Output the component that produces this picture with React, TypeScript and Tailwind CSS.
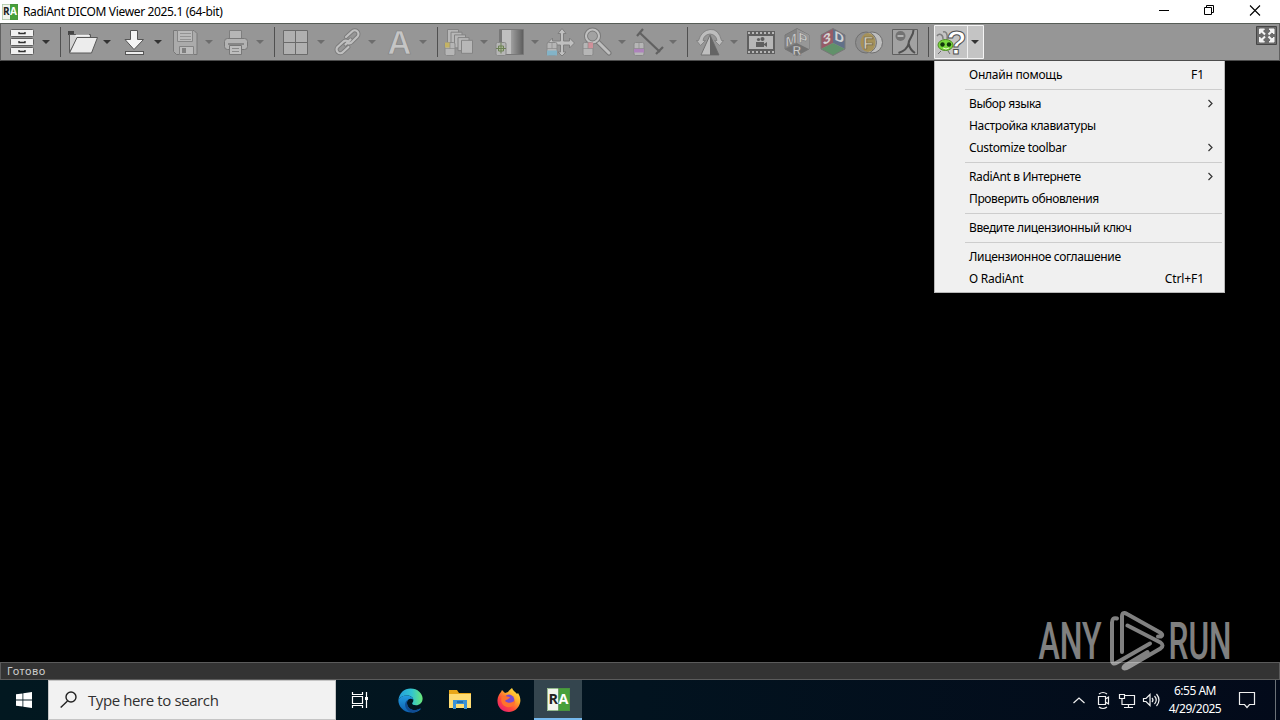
import type { ReactNode } from "react";

/* Toolbar drawings share one coordinate system: x runs along the window, y from its top. */
function Tool({ x, w, children, off = false }: { x: number; w: number; children?: ReactNode; off?: boolean }) {
  return (
    <svg width={w} height={36} viewBox={`${x} 24 ${w} 36`} className={off ? "shrink-0 overflow-visible opacity-70" : "shrink-0 overflow-visible"}>
      {children}
    </svg>
  );
}

function Arrow({ x, off = false }: { x: number; off?: boolean }) {
  return <path d={`M${x} 40h8l-4 4z`} fill={off ? "#5c5c5c" : "#333"} />;
}

function Sep() {
  return <div className="h-[30px] w-px shrink-0 bg-[#505050]" />;
}

function Mouse({ x, y, color }: { x: number; y: number; color: "left" | "right" | "mid" | "move" | "purple" }) {
  return (
    <g>
      <rect x={x} y={y} width="10" height="13" rx="1.5" fill="#c4c4c4" stroke="#848484" />
      {color === "left" && <path d={`M${x} ${y}h5v5h-5z`} fill="#d8c050" />}
      {color === "right" && <path d={`M${x + 5} ${y}h5v6h-5z`} fill="#e8909c" />}
      {color === "mid" && (
        <path d={`M${x + 2.5} ${y + 3.5}h5v5h-5zM${x + 5} ${y}v11M${x} ${y + 6}h10`} fill="#b4cc98" stroke="#5d783b" />
      )}
      {color === "move" && <path d={`M${x} ${y + 8}h10v5h-10z`} fill="#7cc0dc" />}
      {color === "purple" && <path d={`M${x} ${y + 6}h10v4h-10z`} fill="#b87ccc" />}
      {color !== "mid" && <path d={`M${x} ${y + 6}h10M${x + 5} ${y}v6`} stroke="#858585" strokeWidth=".7" />}
    </g>
  );
}

function Toolbar() {
  return (
    <div className="flex h-[38px] w-full shrink-0 items-center border border-t-[#575d57] border-r-[#606060] border-b-[#4c4c4c] border-l-[#606060] bg-[#969696]">
      <Tool x={1} w={59}>
        {[29.5, 38.5, 47.5].map((y) => (
          <g key={y}>
            <rect x="10.5" y={y} width="23" height="7" rx="1" fill="#f1f1f1" stroke="#606060" />
            <path d={`M19 ${y + 2.5}v1.500h6v-1.500`} fill="none" stroke="#303030" strokeWidth="1.4" />
          </g>
        ))}
        <Arrow x={42} />
      </Tool>
      <Sep />
      <Tool x={61} w={52}>
        <path d="M68 35v-4h6v4" fill="#444" />
        <path d="M69.500 52.500v-18h21v4h-13z" fill="#d4d4d4" stroke="#585858" />
        <path d="M77 37.500h20.500l-6 15.500H69.500z" fill="#ececec" stroke="#585858" />
        <path d="M76 34.500h13v2H75z" fill="#f2f2f2" />
        <Arrow x={103} />
      </Tool>
      <Tool x={113} w={52}>
        <path d="M130.500 30.500h7v9h6L134 49.500l-9-10h5.500z" fill="#f5f5f5" stroke="#555" />
        <rect x="125.500" y="51.500" width="18" height="3" fill="#eee" stroke="#555" />
        <Arrow x={154} />
      </Tool>
      <Tool x={165} w={51} off>
        <path d="M173.500 30.500H194l3 3v21h-20.500l-3-3z" fill="#b4b4b4" stroke="#6c6c6c" />
        <path d="M177.500 30.500h15v11h-15z" fill="#cacaca" stroke="#808080" />
        <path d="M180 33.500h11M180 36.500h11M180 39.500h11" stroke="#929292" />
        <path d="M179.500 46.500h14v8h-14z" fill="#cdcdcd" stroke="#7c7c7c" />
        <path d="M182 48h4v5h-4z" fill="#777" />
        <Arrow x={205} off />
      </Tool>
      <Tool x={216} w={58} off>
        <path d="M229.500 38v-7.500h12v7.500" fill="#c4c4c4" stroke="#747474" />
        <rect x="224.500" y="38.500" width="23" height="11" rx="3" fill="#c0c0c0" stroke="#6c6c6c" />
        <path d="M228 44h16" stroke="#606060" strokeWidth="1.3" />
        <path d="M229.500 45.500h12v9h-12z" fill="#cecece" stroke="#6c6c6c" />
        <path d="M232 48.500h7M232 51.500h7" stroke="#848484" />
        <Arrow x={256} off />
      </Tool>
      <Sep />
      <Tool x={275} w={52} off>
        <path d="M283.500 30.500h24v24h-24z" fill="#bcbcbc" stroke="#585858" />
        <path d="M295.500 30v25M283 42.500h25" stroke="#585858" />
        <Arrow x={317} off />
      </Tool>
      <Tool x={327} w={52} off>
        {["#707070", "#d2d2d2"].map((c, i) => (
          <g key={c} fill="none" stroke={c} strokeWidth={i ? 2.2 : 4} strokeLinecap="round">
            <path d="M346 37l6-5.500a3.600 3.600 0 0 1 5.500 5l-6 6q-2 1.500-4 .5" />
            <path d="M348.500 47l-5.500 5a3.600 3.600 0 0 1-5.500-5l6-5.500q2-1.500 4-.5" />
            <path d="M345.500 44.500l5-5" />
          </g>
        ))}
        <Arrow x={368} off />
      </Tool>
      <Tool x={379} w={58} off>
        <text x="387.500" y="54" fontSize="33" fontWeight="700" fontFamily="Liberation Sans, sans-serif" fill="#dadada" stroke="#787878" strokeWidth=".7">A</text>
        <Arrow x={419} off />
      </Tool>
      <Sep />
      <Tool x={438} w={54} off>
        {[0, 3.5, 7, 10.5, 14].map((d, i) => (
          <path key={d} d={`M${447.5 + d} ${29.5 + i * 2.7}h11v13h-11z`} fill="#c6c6c6" stroke="#7c7c7c" />
        ))}
        <Mouse x={445} y={42.5} color="left" />
        <Arrow x={480} off />
      </Tool>
      <Tool x={492} w={52} off>
        <defs>
          <linearGradient id="contrast">
            <stop stopColor="#a4a4a4" />
            <stop offset="1" stopColor="#484848" />
          </linearGradient>
        </defs>
        <path d="M499.500 29.500h24v25h-24z" fill="#808080" stroke="#6c6c6c" />
        <path d="M500 30h11v24h-11z" fill="#d2d2d2" />
        <path d="M500 30h2v24h-2z" fill="#6c6c6c" />
        <path d="M511 30h12v24h-12z" fill="url(#contrast)" />
        <Mouse x={496} y={42.5} color="mid" />
        <Arrow x={531} off />
      </Tool>
      <Tool x={544} w={35} off>
        <path d="M562 28.500l4 5h-2.500v7.500h6v-3l5 5-5 5v-3h-6v7h2.500l-4 4-4-4h2.500v-7h-8v3l-5-5 5-5v3h8v-7.500H558z" fill="#d2d2d2" stroke="#747474" />
        <Mouse x={547} y={42.5} color="move" />
      </Tool>
      <Tool x={579} w={50} off>
        <path d="M597 41l12 12" stroke="#6c6c6c" strokeWidth="5" strokeLinecap="round" />
        <path d="M598 42l11 11" stroke="#d0d0d0" strokeWidth="3" strokeLinecap="round" />
        <circle cx="592.500" cy="36" r="6.500" fill="#a8a8a8" stroke="#6c6c6c" strokeWidth="4" />
        <circle cx="592.500" cy="36" r="6.500" fill="none" stroke="#d2d2d2" strokeWidth="2.200" />
        <Mouse x={583} y={42.5} color="right" />
        <Arrow x={618} off />
      </Tool>
      <Tool x={629} w={58} off>
        <path d="M640 33l20 19M637 36l6-7M656 54l7-7" stroke="#4c4c4c" strokeWidth="2.200" />
        <Mouse x={634} y={42.5} color="purple" />
        <Arrow x={669} off />
      </Tool>
      <Sep />
      <Tool x={688} w={54} off>
        <path d="M710 35l9 20h-18z" fill="#d0d0d0" stroke="#646464" />
        <path d="M710 35v20h9z" fill="#505050" />
        <path d="M698.500 40.500q3-10 11.500-11t11.500 11h2l-4 5-5-5h2.500q-1-6-7-6.500-6 .5-7 6.500h2.500l-5 5-4-5z" fill="#cecece" stroke="#707070" strokeWidth=".8" />
        <Arrow x={730} off />
      </Tool>
      <Tool x={742} w={37} off>
        <path d="M747 31h28v23h-28z" fill="#484848" />
        <path d="M748 33h26M748 52h26" stroke="#c4c4c4" strokeWidth="2" strokeDasharray="2 2" />
        <path d="M749 36h24v13h-24z" fill="#c6c6c6" />
        <path d="M756 42h8v5h-8zM764 44l3-2v5l-3-2z" fill="#484848" />
        <circle cx="758.500" cy="39.500" r="1.600" fill="#484848" />
        <circle cx="762.500" cy="39" r="2" fill="#484848" />
      </Tool>
      <Tool x={779} w={36} off>
        <path d="M797 28.500l12 6.500v14l-12 6.500-12-6.500V35z" fill="#7c7c7c" stroke="#6c6c6c" />
        <path d="M785 49l12-6 12 6-12 6.500z" fill="#646464" />
        <path d="M797 29v14l12 6V35z" fill="#989898" />
        <g fontFamily="Liberation Sans, sans-serif" fontWeight="700" fill="#e4e4e4" stroke="#505050" strokeWidth=".4">
          <text fontSize="14" transform="matrix(.95 -.45 0 1 785.500 47.500)">M</text>
          <text fontSize="14" transform="matrix(.95 .45 0 1 798.500 41.500)">P</text>
          <text x="792.500" y="54.500" fontSize="12">R</text>
        </g>
      </Tool>
      <Tool x={815} w={36} off>
        <path d="M821 35l12-6.500v14.500l-12 6z" fill="#964454" />
        <path d="M833 28.500l12 6.500v14l-12-6z" fill="#4c6084" />
        <path d="M821 49l12-6 12 6-12 6.500z" fill="#4c9058" />
        <path d="M833 28.500l12 6.500v14l-12 6.500-12-6.500V35z" fill="none" stroke="#6c6c6c" />
        <g fontFamily="Liberation Sans, sans-serif" fontWeight="700" fill="#eee">
          <text fontSize="14" transform="matrix(1 -.45 0 1 823 45)">3</text>
          <text fontSize="13" transform="matrix(1 .45 0 1 834.500 39.500)">D</text>
        </g>
      </Tool>
      <Tool x={851} w={36} off>
        <circle cx="872" cy="42.500" r="10.500" fill="#d0d0d0" stroke="#606060" />
        <circle cx="866" cy="42.500" r="10.500" fill="#8c8c8c" stroke="#606060" />
        <path d="M869 33a10.500 10.500 0 0 1 0 19 10.500 10.500 0 0 1 0-19z" fill="#b08c30" stroke="#ddd" />
        <ellipse cx="868" cy="42.500" rx="7.500" ry="9.500" fill="#ac8f40" />
        <text x="863" y="48.500" fontSize="17" fontWeight="700" fontFamily="Liberation Sans, sans-serif" fill="#ece4c4" stroke="#5a4c26" strokeWidth=".7">F</text>
      </Tool>
      <Tool x={887} w={41} off>
        <path d="M892.500 29.500h25v25h-25z" fill="#a8a8a8" stroke="#484848" />
        <circle cx="900.500" cy="36" r="5" fill="#646464" />
        <path d="M897.500 36h6" stroke="#ddd" strokeWidth="1.500" />
        <path d="M913.500 30c0 7-5 8-5 14-1 4-4 7-10 9M908.500 43c1 5 3 8 6.500 10" fill="none" stroke="#333" strokeWidth="2" />
      </Tool>
      <Sep />
      <Tool x={929} w={56}>
        <path d="M934.500 25.500h49v33h-49z" fill="#c4c4c4" stroke="#f4f4f4" />
        <path d="M967.500 26v32" stroke="#f1f1f1" />
        <path d="M943 39c0-5-4-6-6-3M947 39c1-5-1-8-4-7" fill="none" stroke="#808080" strokeWidth="1.500" />
        <text x="946.500" y="53.500" fontSize="33" fontWeight="700" fontFamily="Liberation Sans, sans-serif" fill="#fff" stroke="#505050" strokeWidth="1">?</text>
        <ellipse cx="945.500" cy="45" rx="7.500" ry="5.500" fill="#78d83c" stroke="#508c28" />
        <path d="M941 51l-3 3M948 51l2 3" stroke="#6c6c6c" />
        <circle cx="942.500" cy="44.500" r="2.200" fill="#12370c" />
        <circle cx="949" cy="44.500" r="2.200" fill="#12370c" />
        <path d="M943 48q3 2 6 0" fill="none" stroke="#eaf8ca" />
        <Arrow x={971} />
      </Tool>
      <div className="flex-1" />
      <svg width="23" height="36" viewBox="1256 24 23 36" className="shrink-0">
        <path d="M1256.500 26.500h20v18h-20z" fill="#6c6c6c" stroke="#464646" />
        <g fill="#f3f3f3" stroke="#f3f3f3">
          <path d="M1259.500 29h5l-5 5zM1274 29v5l-5-5zM1259.500 42v-5l5 5zM1274 42h-5l5-5z" />
          <path d="M1261 30.500l4 4M1272.500 30.500l-4 4M1261 40.500l4-4M1272.500 40.500l-4-4" strokeWidth="2" />
        </g>
      </svg>
    </div>
  );
}

function MenuRow({ label, track, keys, sub = false }: { label: string; track: string; keys?: string; sub?: boolean }) {
  return (
    <div className="flex h-[22px] items-center pr-5 pl-[34px]">
      <span className={track}>{label}</span>
      {keys && <span className="ml-auto tracking-[-0.1px]">{keys}</span>}
      {sub && (
        <svg className="-mt-px -mr-[10px] ml-auto" width="7" height="9" viewBox="0 0 7 9">
          <path d="M1.500 1l3.500 3.500L1.500 8" fill="none" stroke="#333" strokeWidth="1.200" />
        </svg>
      )}
    </div>
  );
}

function Rule() {
  return (
    <div className="flex h-[7px] items-center pr-[2px] pl-[30px]">
      <div className="h-px w-full bg-[#cdcdcd]" />
    </div>
  );
}

function HelpMenu() {
  return (
    <div className="absolute top-[61px] left-[934px] h-[232px] w-[291px] border border-t-0 border-[#b8b8b8] bg-[#f0f0f0] pt-[3px] text-[12px] whitespace-nowrap text-black">
      <MenuRow label="Онлайн помощь" keys="F1" track="tracking-[-0.23px]" />
      <Rule />
      <MenuRow label="Выбор языка" sub track="tracking-[-0.4px]" />
      <MenuRow label="Настройка клавиатуры" track="tracking-[-0.35px]" />
      <MenuRow label="Customize toolbar" sub track="tracking-[-0.35px]" />
      <Rule />
      <MenuRow label="RadiAnt в Интернете" sub track="tracking-[-0.37px]" />
      <MenuRow label="Проверить обновления" track="tracking-[-0.39px]" />
      <Rule />
      <MenuRow label="Введите лицензионный ключ" track="tracking-[-0.37px]" />
      <Rule />
      <MenuRow label="Лицензионное соглашение" track="tracking-[-0.34px]" />
      <MenuRow label="О RadiAnt" keys="Ctrl+F1" track="tracking-[-0.22px]" />
    </div>
  );
}

function RadiAntLogo({ size }: { size: number }) {
  return (
    <svg width={size} height={size} viewBox="0 0 24 24">
      <path d="M0 0h12v24H0z" fill="#f2f5ed" />
      <path d="M12 0h12v24H12z" fill="#47a03b" />
      <path d="M.5 .5h23v23H.5z" fill="none" stroke="#4b8942" strokeWidth=".6" />
      <g fontFamily="Open Sans, sans-serif" fontSize="15" fontWeight="700">
        <text x="1.500" y="17" fill="#222">R</text>
        <text x="12" y="17" fill="#fff">A</text>
      </g>
    </svg>
  );
}

function TitleBar() {
  return (
    <div className="flex h-[23px] shrink-0 items-center bg-white pl-[2px]">
      <RadiAntLogo size={16} />
      <span className="ml-[5px] text-[12px] tracking-[-0.35px] whitespace-nowrap text-black">RadiAnt DICOM Viewer 2025.1 (64-bit)</span>
      <svg className="ml-auto" width="140" height="23" viewBox="1140 0 140 23" fill="none" stroke="#000">
        <path d="M1159 10.500h10M1204.500 7.500h7v7h-7zM1206.500 7.500v-2h7v7h-2" />
        <path d="M1250 5.500l10 10M1260 5.500l-10 10" strokeWidth="1.100" />
      </svg>
    </div>
  );
}

function Watermark() {
  return (
    <svg className="absolute top-[606px] left-[1036px] overflow-visible opacity-50" width="200" height="68" viewBox="1036 606 200 68">
      <g fontFamily="Roboto, sans-serif" fontWeight="500" fontSize="52" fill="#fff">
        <text x="1038.500" y="659" textLength="63" lengthAdjust="spacingAndGlyphs">ANY</text>
        <text x="1168.500" y="659" textLength="63" lengthAdjust="spacingAndGlyphs">RUN</text>
      </g>
      <g fill="none" stroke="#fff" strokeWidth="4" strokeLinejoin="round" strokeLinecap="round">
        <path d="M1117 618.500q-5-1.500-5 4v37q0 6 5 3l33-19" />
        <path d="M1122 652v-35q0-6 5-3l34 19q2.500 2 0 3.500h-3" />
        <path d="M1127.500 625.500l33 17q4 3 0 6l-31 18q-5 3-6 1.500 0-2 4-4l20-12" />
      </g>
    </svg>
  );
}

function Taskbar() {
  return (
    <div className="flex h-10 shrink-0 bg-linear-to-r from-[#021820] via-[#02131f] to-[#030a1a]">
      <div className="flex w-12 items-center justify-center">
        <svg width="16" height="16" viewBox="0 0 16 16" fill="#fff">
          <path d="M0 2.300l6.500-.9v6.200H0zM7.300 1.300L16 0v7.600H7.300zM0 8.400h6.500v6.200L0 13.700zM7.300 8.400H16V16l-8.700-1.300z" />
        </svg>
      </div>
      <div className="flex w-[288px] items-center border border-[#c5c5c5] bg-[#f2f2f2] pl-[11px]">
        <svg width="17" height="18" viewBox="0 0 17 18" fill="none" stroke="#222" strokeWidth="1.400">
          <circle cx="11" cy="6" r="5" />
          <path d="M7.500 10L.7 16.500" />
        </svg>
        <span className="ml-[11px] font-['Open_Sans','Noto_Sans',sans-serif] text-[15px] tracking-[-0.4px] whitespace-nowrap text-[#303030]">Type here to search</span>
      </div>
      <div className="flex w-[48px] items-center justify-center">
        <svg width="18" height="18" viewBox="0 0 18 18" fill="none" stroke="#fff" strokeWidth="1.200">
          <path d="M1.500 1v2.500h10V1M1.500 17v-2.500h10V17M1.500 5.500h10v7h-10zM15.500 1v16" />
          <path d="M14 6h3v3h-3z" fill="#fff" stroke="none" />
        </svg>
      </div>
      <div className="flex w-[53px] items-center justify-center">
        <svg width="25" height="25" viewBox="0 0 256 256">
          <defs>
            <linearGradient id="edgeTop">
              <stop stopColor="#229ddb" />
              <stop offset=".55" stopColor="#32c4d0" />
              <stop offset="1" stopColor="#6ae878" />
            </linearGradient>
            <linearGradient id="edgeBlue" x2="0" y2="1">
              <stop stopColor="#239ce0" />
              <stop offset="1" stopColor="#0c5dac" />
            </linearGradient>
          </defs>
          <path d="M4 120C14 50 64 4 128 4c74 0 124 52 124 104 0 45-33 69-67 69-26 0-43-9-40-20 5-12 14-16 12-37-3-24-30-43-65-43-40 0-74 18-88 43z" fill="url(#edgeTop)" />
          <path d="M4 120c15-23 46-43 84-43 37 0 65 19 69 43-14-14-38-15-53 0-22 22-14 76 30 98 29 14 65 10 91-7 7-4 11 0 7 6-22 26-61 38-98 35C58 248 0 190 4 120z" fill="url(#edgeBlue)" />
          <path d="M104 120c-22 22-14 76 30 98 29 14 65 10 91-7-25 44-88 49-126 16-37-31-34-90 5-107z" fill="#104b91" />
        </svg>
      </div>
      <div className="flex w-[46px] items-center justify-center">
        <svg width="22" height="20" viewBox="0 0 22 20">
          <path d="M0 0h8l2 3h12v15H0z" fill="#e9a719" />
          <path d="M0 4h22v14H0z" fill="#ffdc73" />
          <path d="M4 10h14v9h-3v-5H7v5H4z" fill="#3b91d6" />
          <path d="M8 12h6" stroke="#155b9d" strokeWidth="1.300" />
        </svg>
      </div>
      <div className="flex w-[51px] items-center justify-center">
        <svg width="24" height="24" viewBox="0 0 24 24">
          <defs>
            <linearGradient id="fox" x1="1" y1="0" x2=".2" y2="1">
              <stop stopColor="#fff44b" />
              <stop offset=".4" stopColor="#ffac29" />
              <stop offset=".7" stopColor="#ff4b3a" />
              <stop offset="1" stopColor="#e91b74" />
            </linearGradient>
          </defs>
          <path d="M4 4l1-2 3 3 3-1c1-2 3-3 4-4 1 3 4 4 5 6l1-1c2 3 3 7 2 10-1 5-6 9-11 9C5 24 0 19 .5 12 .7 9 2 6 4 4z" fill="url(#fox)" />
          <circle cx="12" cy="12" r="5.400" fill="#784bd0" />
          <path d="M5 8c4-1 5 1 8 1-1 3-4 2-5 4 3 3 8 2 10-1 1 5-4 8-8 7-5-1-7-6-5-11z" fill="#ff722d" />
        </svg>
      </div>
      <div className="flex h-10 w-12 items-center justify-center border-b-2 border-[#76b9ed] bg-[#34454e]">
        <RadiAntLogo size={23} />
      </div>
      <div className="flex-1" />
      <svg width="95" height="40" viewBox="1070 680 95 40" fill="none" stroke="#f1f1f1" strokeWidth="1.200">
        <path d="M1073.500 703l5.500-5 5.500 5" />
        <path d="M1098.500 696.500h7v8h-7zM1105.500 699l3-2v7l-3-2M1099 694q4-3 8 0M1099 707q4 3 8 0" />
        <path d="M1124.500 695.500h10v9h-10M1121.500 704.500h3M1128.500 704.500v3M1124 707.500h9M1119.500 694.500h5v4h-5zM1122 698.500v6" />
        <path d="M1143.500 698.500h2.500l4-4v11l-4-4h-2.500zM1152 698q2 2 0 4M1154.500 696q3.500 4 0 8M1156.500 694q5 6 0 12" />
      </svg>
      <div className="flex w-[60px] flex-col items-center justify-center text-[12px] leading-[18px] tracking-[-0.5px] whitespace-nowrap text-white">
        <span>6:55 AM</span>
        <span>4/29/2025</span>
      </div>
      <svg width="55" height="40" viewBox="1225 680 55 40" fill="none" stroke="#eee">
        <path d="M1239.500 692.500h15v12h-5l-2.500 3-2.500-3h-5z" strokeWidth="1.200" />
        <path d="M1275.500 680v40" stroke="#6c7278" />
      </svg>
    </div>
  );
}

export default function App() {
  return (
    <div className="relative flex h-[720px] w-[1280px] flex-col overflow-hidden bg-black font-['Noto_Sans','Open_Sans',sans-serif]">
      <TitleBar />
      <Toolbar />
      <main className="flex-1 bg-black" />
      <footer className="flex h-[18px] shrink-0 items-center border border-[#5b5b5b] bg-[#333] pl-[6px] text-[11px] tracking-[0.5px] text-[#ccc]">
        Готово
      </footer>
      <Taskbar />
      <HelpMenu />
      <Watermark />
    </div>
  );
}
